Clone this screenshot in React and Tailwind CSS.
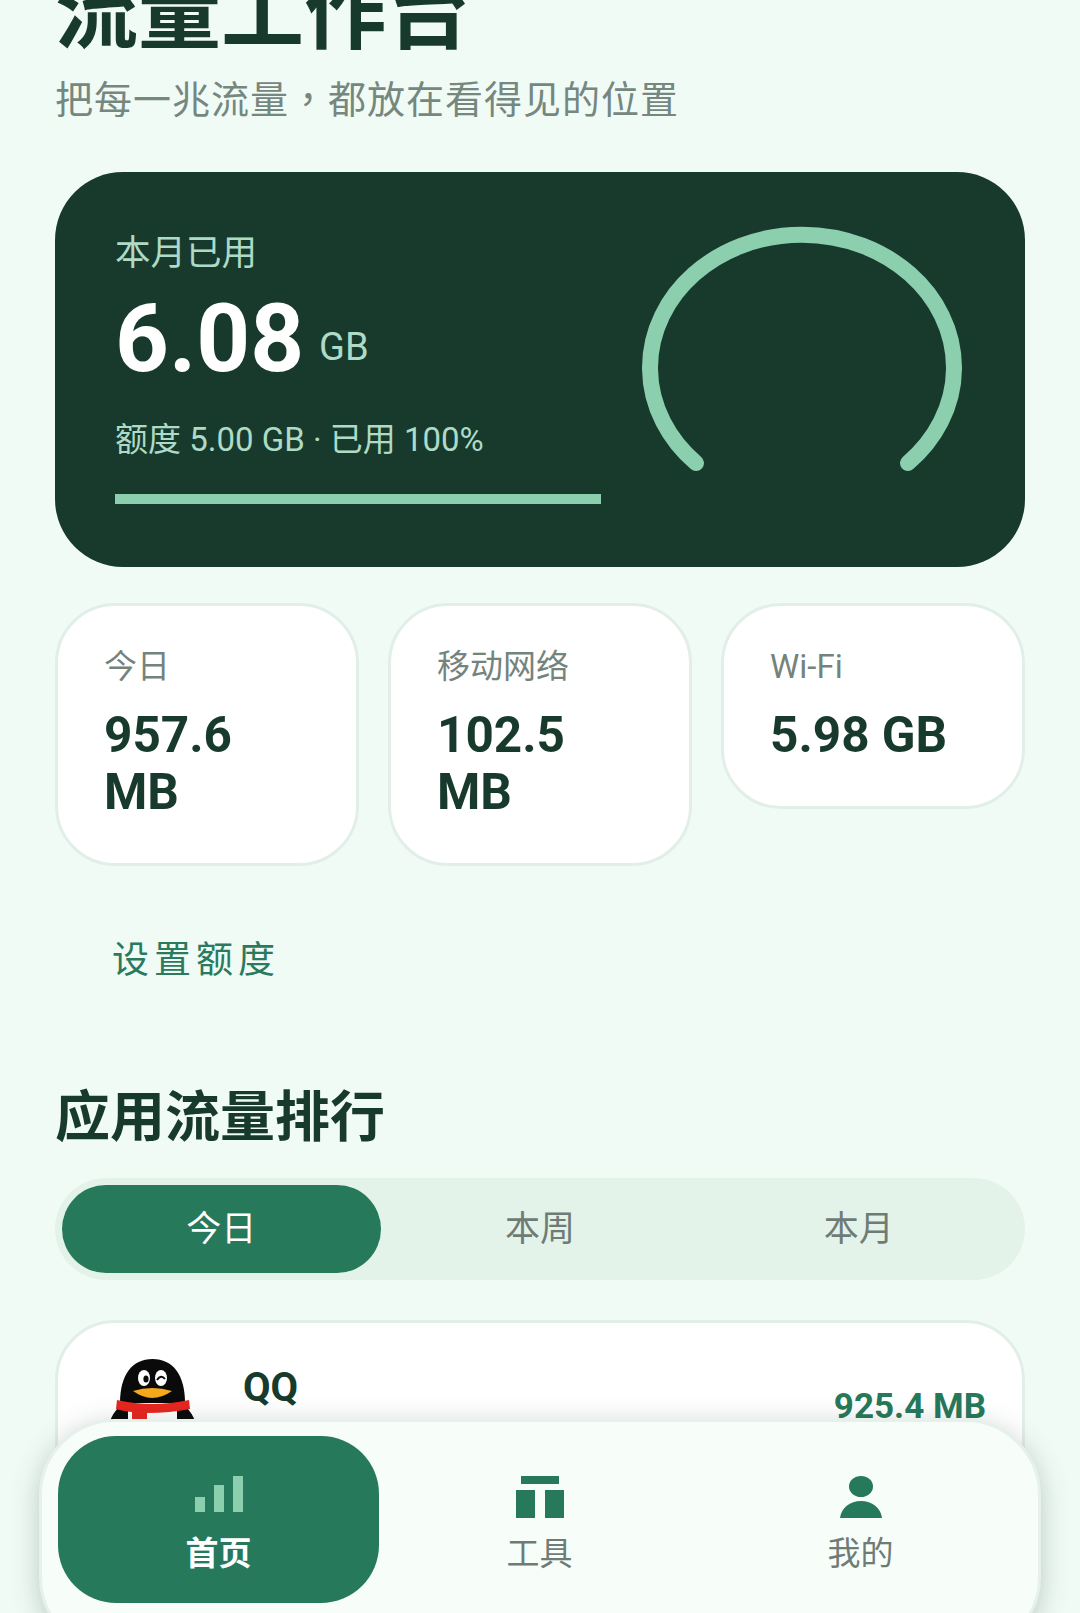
const font = "font-['Roboto','Noto_Sans_CJK_SC',sans-serif]"

function StatCard({ label, lines }) {
  return (
    <div className="rounded-[60px] border-[3px] border-[#e2efe8] bg-white pl-[46px] pr-[16px] pt-[38px] pb-[42px]">
      <div className="text-[33px] leading-[46px] text-[#74837c]">{label}</div>
      <div className="mt-[17px] text-[49.5px] font-bold leading-[57px] text-[#183a2d]">
        {lines.map((l) => <div key={l}>{l}</div>)}
      </div>
    </div>
  )
}

function Gauge() {
  return (
    <svg width="340" height="250" viewBox="0 0 340 250" fill="none" className="shrink-0">
      <path d="M64 237 A152 133 0 1 1 276 237" stroke="#8bcfae" strokeWidth="16" strokeLinecap="round" />
    </svg>
  )
}

function Penguin() {
  return (
    <svg width="87" height="70" viewBox="0 0 87 70" className="shrink-0">
      <path d="M11 48 C11 20 23 4 43.5 4 C64 4 76 20 76 48 Z" fill="#0a0a0a" />
      <path d="M17 52 H70 V70 H17 Z" fill="#fff" />
      <path d="M1 66 Q4 58 10 52 L19 54 L19 70 H1 Z" fill="#0a0a0a" />
      <path d="M86 66 Q83 58 77 52 L68 54 L68 70 H86 Z" fill="#0a0a0a" />
      <path d="M8 45 Q43 53 80 45 L81 54 Q61 58 38 58 L38 70 H23 L23 57 Q13 56 7 54 Z" fill="#e8261f" />
      <ellipse cx="35" cy="23" rx="6" ry="8" fill="#fff" />
      <ellipse cx="37" cy="24" rx="2.6" ry="3.6" fill="#0a0a0a" />
      <ellipse cx="52" cy="23" rx="6" ry="8" fill="#fff" />
      <path d="M48 25 Q52 19 56 24" stroke="#0a0a0a" strokeWidth="2" fill="none" />
      <path d="M24 36 Q43 30 63 36 Q53 43 43 43 Q34 43 24 36Z" fill="#f5a81c" />
    </svg>
  )
}

function NavItem({ active, icon, label }) {
  return (
    <div className={`flex flex-1 flex-col items-center rounded-[58px] pt-[40px] ${active ? 'h-[167px] bg-[#27795c] text-white font-bold' : 'text-[#6f7c76]'}`}>
      <div className="h-[56px]">{icon}</div>
      <div className="text-[33px] leading-[44px]">{label}</div>
    </div>
  )
}

export default function App() {
  return (
    <div className={`relative h-[1613px] overflow-hidden bg-[#f1fbf6] ${font}`}>
      <div className="px-[55px]">
        <h1 className="-mt-[32px] text-[83px] font-bold leading-[92px] text-[#183a2d]">流量工作台</h1>
        <p className="mt-[12px] h-[50px] text-[38px] leading-[50px] tracking-[1px] text-[#75877f]">
          把每一兆流量<span className="font-['Noto_Sans_CJK_TC']">，</span>都放在看得见的位置
        </p>

        <div className="mt-[50px] flex h-[395px] justify-between rounded-[68px] bg-[#183a2d] pl-[60px] pr-[53px]">
          <div className="w-[486px] pt-[56px]">
            <div className="text-[35.5px] leading-[50px] text-[#aedbc6]">本月已用</div>
            <div className="mt-[11px] flex items-center gap-[15px]">
              <span className="text-[94px] font-bold leading-[100px] text-white">6.08</span>
              <span className="mt-[16px] text-[38px] leading-[44px] text-[#aedbc6]">GB</span>
            </div>
            <div className="mt-[29px] text-[33px] leading-[44px] text-[#aedbc6]">额度 5.00 GB · 已用 100%</div>
            <div className="mt-[32px] h-[10px] bg-[#8bcfae]" />
          </div>
          <div className="pt-[54px]"><Gauge /></div>
        </div>

        <div className="mt-[36px] grid grid-cols-3 items-start gap-[29px]">
          <StatCard label="今日" lines={['957.6', 'MB']} />
          <StatCard label="移动网络" lines={['102.5', 'MB']} />
          <StatCard label="Wi-Fi" lines={['5.98 GB']} />
        </div>

        <div className="mt-[68px] pl-[57px] text-[37px] leading-[54px] tracking-[5px] text-[#2a7a5d]">设置额度</div>

        <h2 className="mt-[91px] text-[55px] font-bold leading-[76px] text-[#183a2d]">应用流量排行</h2>

        <div className="mt-[23px] flex h-[102px] rounded-full bg-[#e3f3ea] p-[7px] text-[35px] text-[#6f7c76]">
          <div className="flex flex-1 items-center justify-center rounded-full bg-[#27795c] pt-[3px] text-white">今日</div>
          <div className="flex flex-1 items-center justify-center pt-[3px]">本周</div>
          <div className="flex flex-1 items-center justify-center pt-[3px]">本月</div>
        </div>

        <div className="mt-[40px] flex h-[240px] rounded-[60px] border-[3px] border-[#e2efe8] bg-white pl-[51px] pr-[36px] pt-[32px]">
          <Penguin />
          <div className="ml-[47px] mt-[8px] flex-1 text-[40px] font-bold leading-[50px] text-[#183a2d]">QQ</div>
          <div className="pt-[30px] text-[35px] font-bold leading-[44px] text-[#27795c]">925.4 MB</div>
        </div>
      </div>

      <nav className="absolute bottom-[-40px] left-[39px] right-[39px] flex h-[234px] items-start rounded-[76px] border-[3px] border-[#e6f1eb] bg-[#f7fefa] pl-[16px] pr-[17px] pt-[14px] shadow-[0_6px_28px_rgba(24,58,45,0.25)]">
        <NavItem
          active
          label="首页"
          icon={
            <svg width="48" height="36" viewBox="0 0 48 36" fill="#8bcfae">
              <rect x="0" y="21" width="10" height="15" />
              <rect x="19" y="9" width="10" height="27" />
              <rect x="38" y="0" width="10" height="36" />
            </svg>
          }
        />
        <NavItem
          label="工具"
          icon={
            <svg width="48" height="42" viewBox="0 0 48 42" fill="#27795c">
              <rect x="5" y="0" width="38" height="8" />
              <rect x="0" y="14" width="19" height="28" />
              <rect x="29" y="14" width="19" height="28" />
            </svg>
          }
        />
        <NavItem
          label="我的"
          icon={
            <svg width="44" height="42" viewBox="0 0 44 42" fill="#27795c">
              <ellipse cx="22" cy="10.5" rx="12" ry="10.5" />
              <path d="M1 42 C2 32 11 25 22 25 C33 25 42 32 43 42 Z" />
            </svg>
          }
        />
      </nav>
    </div>
  )
}
